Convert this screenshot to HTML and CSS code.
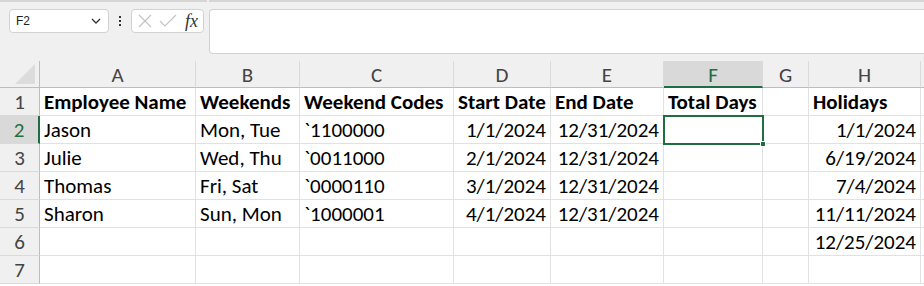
FILE: index.html
```html
<!DOCTYPE html>
<html>
<head lang="en">
    <meta charset="UTF-8">
    <title>Total Days</title>
    <link rel="stylesheet" href="styles.css">
</head>
<body>
<div class="topline"><span class="seg1"></span><span class="seg2"></span></div>
<div class="toolbar">
    <div class="namebox">
        <span>F2</span>
        <svg width="12" height="8" viewBox="0 0 12 8"><path d="M2 2 L6 6 L10 2" fill="none" stroke="#333" stroke-width="1.3"/></svg>
    </div>
    <div class="dots"><i></i><i></i><i></i></div>
    <div class="fxbox">
        <svg width="14" height="14" viewBox="0 0 14 14"><path d="M1 1 L13 13 M13 1 L1 13" stroke="#c4c4c4" stroke-width="1.2"/></svg>
        <svg width="18" height="14" viewBox="0 0 18 14"><path d="M1 7 L6 12 L17 1" fill="none" stroke="#c4c4c4" stroke-width="1.2"/></svg>
        <span class="fx">fx</span>
    </div>
    <div class="formula"></div>
</div>
<div class="sheet">
    <div class="hd corner"><span class="tri"></span></div>
    <div class="hd col">A</div>
    <div class="hd col">B</div>
    <div class="hd col">C</div>
    <div class="hd col">D</div>
    <div class="hd col">E</div>
    <div class="hd col sel">F</div>
    <div class="hd col">G</div>
    <div class="hd col">H</div>
    <div class="hd col"></div>

    <div class="hd row">1</div>
    <div class="c b">Employee Name</div>
    <div class="c b">Weekends</div>
    <div class="c b">Weekend Codes</div>
    <div class="c b">Start Date</div>
    <div class="c b">End Date</div>
    <div class="c b">Total Days</div>
    <div class="c"></div>
    <div class="c b">Holidays</div>
    <div class="c"></div>

    <div class="hd row sel">2</div>
    <div class="c">Jason</div>
    <div class="c">Mon, Tue</div>
    <div class="c">`1100000</div>
    <div class="c r">1/1/2024</div>
    <div class="c r">12/31/2024</div>
    <div class="c active"><span class="handle"></span></div>
    <div class="c"></div>
    <div class="c r">1/1/2024</div>
    <div class="c"></div>

    <div class="hd row">3</div>
    <div class="c">Julie</div>
    <div class="c">Wed, Thu</div>
    <div class="c">`0011000</div>
    <div class="c r">2/1/2024</div>
    <div class="c r">12/31/2024</div>
    <div class="c"></div>
    <div class="c"></div>
    <div class="c r">6/19/2024</div>
    <div class="c"></div>

    <div class="hd row">4</div>
    <div class="c">Thomas</div>
    <div class="c">Fri, Sat</div>
    <div class="c">`0000110</div>
    <div class="c r">3/1/2024</div>
    <div class="c r">12/31/2024</div>
    <div class="c"></div>
    <div class="c"></div>
    <div class="c r">7/4/2024</div>
    <div class="c"></div>

    <div class="hd row">5</div>
    <div class="c">Sharon</div>
    <div class="c">Sun, Mon</div>
    <div class="c">`1000001</div>
    <div class="c r">4/1/2024</div>
    <div class="c r">12/31/2024</div>
    <div class="c"></div>
    <div class="c"></div>
    <div class="c r">11/11/2024</div>
    <div class="c"></div>

    <div class="hd row">6</div>
    <div class="c"></div>
    <div class="c"></div>
    <div class="c"></div>
    <div class="c"></div>
    <div class="c"></div>
    <div class="c"></div>
    <div class="c"></div>
    <div class="c r">12/25/2024</div>
    <div class="c"></div>

    <div class="hd row">7</div>
    <div class="c"></div>
    <div class="c"></div>
    <div class="c"></div>
    <div class="c"></div>
    <div class="c"></div>
    <div class="c"></div>
    <div class="c"></div>
    <div class="c"></div>
    <div class="c"></div>
</div>
</body>
</html>
```

FILE: styles.css
```css
* {
    padding: 0;
    margin: 0;
    box-sizing: border-box;
}

body {
    width: 924px;
    height: 286px;
    overflow: hidden;
    background: #fff;
    font-family: Carlito, Calibri, "Open Sans", "Liberation Sans", sans-serif;
}

.topline {
    display: flex;
    height: 2px;
    background: #f0f0f0;
}

.topline .seg1 {
    width: 207px;
    background: #d6d6d6;
}

.topline .seg2 {
    flex: 1;
    margin-left: 2px;
    background: #d6d6d6;
}

.toolbar {
    height: 59px;
    background: #f0f0f0;
    display: flex;
    align-items: flex-start;
    padding: 7px 0 0 9px;
}

.namebox {
    width: 100px;
    height: 24px;
    background: #fff;
    border: 1px solid #d2d2d2;
    border-radius: 4px;
    display: flex;
    align-items: center;
    justify-content: space-between;
    padding: 0 6px 0 6px;
    font-family: "Liberation Sans", Arial, sans-serif;
    font-size: 12px;
    color: #222;
}

.dots {
    width: 22px;
    height: 24px;
    display: flex;
    flex-direction: column;
    align-items: center;
    justify-content: center;
    gap: 2px;
}

.dots i {
    width: 2px;
    height: 2px;
    background: #333;
}

.fxbox {
    width: 73px;
    height: 24px;
    background: #fff;
    border: 1px solid #d2d2d2;
    border-radius: 4px;
    display: flex;
    align-items: center;
    gap: 7px;
    padding-left: 6px;
}

.fx {
    font-family: "Liberation Serif", serif;
    font-style: italic;
    font-size: 18px;
    line-height: 18px;
    color: #333;
    margin-left: 1px;
}

.formula {
    flex: 1;
    height: 45px;
    margin-left: 5px;
    background: #fff;
    border: 1px solid #d2d2d2;
    border-right: 0;
    border-radius: 4px 0 0 4px;
}

.sheet {
    display: grid;
    grid-template-columns: 40px 156px 104px 154px 97px 113px 99px 46px 112px 40px;
    grid-auto-rows: 28px;
    grid-template-rows: 27px;
    font-size: 21px;
    color: #000;
}

.hd {
    background: #f0f0f0;
    color: #444;
    display: flex;
    align-items: center;
    justify-content: center;
}

.corner {
    position: relative;
    border-right: 1px solid #bdbdbd;
    border-bottom: 1px solid #bdbdbd;
}

.corner .tri {
    position: absolute;
    right: 4px;
    bottom: 3px;
    width: 0;
    height: 0;
    border-left: 20px solid transparent;
    border-bottom: 20px solid #dcdcdc;
}

.col {
    border-right: 1px solid #dadada;
    border-bottom: 1px solid #bdbdbd;
    padding-top: 2px;
}

.col.sel {
    background: #d9d9d9;
    color: #1e6e42;
    border-bottom: 2px solid #1e6e42;
}

.row {
    border-right: 1px solid #bdbdbd;
    border-bottom: 1px solid #dadada;
}

.row.sel {
    background: #d9d9d9;
    color: #1e6e42;
    border-right: 2px solid #1e6e42;
}

.c {
    border-right: 1px solid #e1e1e1;
    border-bottom: 1px solid #e1e1e1;
    padding: 0 4px;
    display: flex;
    align-items: center;
    white-space: nowrap;
}

.c.b {
    font-weight: bold;
}

.c.r {
    justify-content: flex-end;
}

.c.active {
    position: relative;
    border: 2px solid #1e6e42;
    margin: -1px 0 0 -1px;
    width: 101px;
    height: 30px;
}

.handle {
    position: absolute;
    right: -4px;
    bottom: -4px;
    width: 6px;
    height: 6px;
    background: #1e6e42;
    border: 1px solid #fff;
}
```
